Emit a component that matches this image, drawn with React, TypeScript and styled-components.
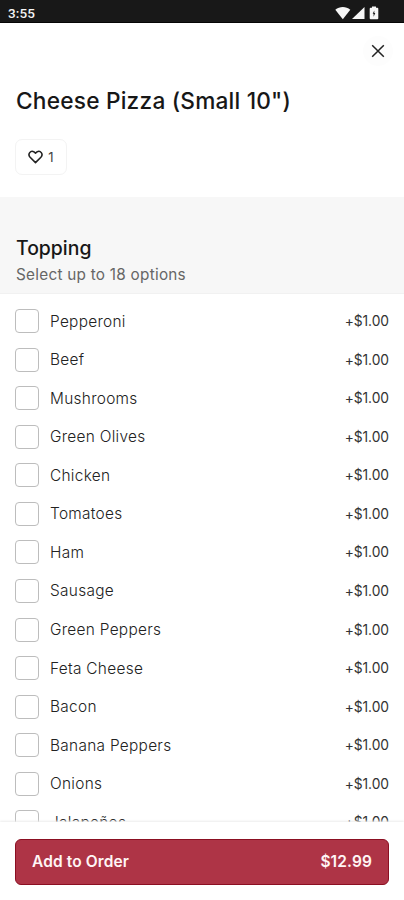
import React from "react";
import styled, { createGlobalStyle } from "styled-components";

const GlobalStyle = createGlobalStyle`
  * { box-sizing: border-box; }
  body {
    margin: 0;
    background: #fff;
    font-family: Inter, "Liberation Sans", sans-serif;
    overflow: hidden;
  }
`;

const Screen = styled.div`
  width: 404px;
  height: 900px;
  display: flex;
  flex-direction: column;
  overflow: hidden;
  background: #fff;
`;

const StatusBar = styled.div`
  height: 23px;
  flex: none;
  display: flex;
  align-items: center;
  justify-content: space-between;
  padding: 3px 25px 0 8px;
  background: #181818;
  border-bottom: 1px solid #050505;
`;

const Clock = styled.span`
  font: 500 13.5px/18px Roboto, sans-serif;
  letter-spacing: 0.1px;
  color: #f4f4f4;
`;

const StatusIcons = styled.svg`
  display: block;
  width: 44px;
  height: 14px;
`;

const ItemHeader = styled.header`
  height: 174px;
  flex: none;
  display: flex;
  flex-direction: column;
  align-items: flex-start;
  padding: 13px 11px 0 15px;
`;

const CloseButton = styled.button`
  align-self: flex-end;
  width: 30px;
  height: 30px;
  padding: 0;
  border: 0;
  border-radius: 50%;
  background: #fdfdfd;
  display: grid;
  place-items: center;
`;

const Title = styled.h1`
  margin: 20px 0 0 1px;
  font-size: 22.7px;
  line-height: 30px;
  font-weight: 500;
  letter-spacing: 0.2px;
  white-space: nowrap;
  color: #171717;
`;

const LikeButton = styled.button`
  margin-top: 23px;
  width: 52px;
  height: 36px;
  padding: 0;
  border: 1px solid #f3f3f3;
  border-radius: 7px;
  background: #fff;
  display: flex;
  align-items: center;
  justify-content: center;
  gap: 5px;
  font: 400 13px/16px Inter, sans-serif;
  color: #444;
`;

const SectionHeader = styled.div`
  height: 97px;
  flex: none;
  padding: 38px 16px 0;
  background: #f7f7f7;
  border-bottom: 1px solid #f1f1f1;
`;

const SectionTitle = styled.h2`
  margin: 0;
  font-size: 19.4px;
  line-height: 27px;
  font-weight: 500;
  color: #171717;
`;

const SectionHint = styled.p`
  margin: 2px 0 0;
  font-size: 15.3px;
  line-height: 22px;
  letter-spacing: 0.26px;
  color: #666;
`;

const OptionList = styled.div`
  flex: 1;
  min-height: 0;
  overflow: hidden;
  padding: 8px 15px 0;
`;

const OptionRow = styled.label`
  height: 38.54px;
  display: flex;
  align-items: center;
`;

const Checkbox = styled.input`
  appearance: none;
  flex: none;
  width: 24px;
  height: 24px;
  margin: 0 11px 0 0;
  border: 1px solid #bdbdbd;
  border-radius: 4px;
  background: #fff;
`;

const OptionName = styled.span`
  flex: 1;
  padding-top: 1px;
  font-size: 15.4px;
  line-height: 20px;
  font-weight: 300;
  letter-spacing: 0.3px;
  color: #222;
`;

const OptionPrice = styled.span`
  font-size: 13.8px;
  line-height: 20px;
  letter-spacing: -0.05px;
  color: #333;
`;

const Footer = styled.footer`
  height: 78px;
  flex: none;
  padding: 17px 15px 0;
  background: #fff;
  box-shadow: 0 -1px 2px #ececec;
  z-index: 1;
`;

const OrderButton = styled.button`
  width: 100%;
  height: 46px;
  padding: 0 16px;
  border: 1px solid #8b0f22;
  border-radius: 6px;
  background: #ae3446;
  display: flex;
  align-items: center;
  justify-content: space-between;
  font: 600 15.5px/20px Inter, sans-serif;
  letter-spacing: 0.12px;
  color: #fff5f5;
`;

const toppings = [
  "Pepperoni",
  "Beef",
  "Mushrooms",
  "Green Olives",
  "Chicken",
  "Tomatoes",
  "Ham",
  "Sausage",
  "Green Peppers",
  "Feta Cheese",
  "Bacon",
  "Banana Peppers",
  "Onions",
  "Jalapeños",
];

export default function App() {
  return (
    <>
      <GlobalStyle />
      <Screen>
        <StatusBar>
          <Clock>3:55</Clock>
          <StatusIcons viewBox="0 0 44 14" fill="#f6f6f6">
            <path d="M0.3 3.8C4.6 0.2 11 0.2 15.3 3.8L7.8 13.3Z" />
            <path d="M29.5 1V13H17Z" />
            <path
              fillRule="evenodd"
              d="M37 0.5h4v1.3h1.3q1 0 1 1V12.2q0 1-1 1h-6.6q-1 0-1-1V2.8q0-1 1-1H37ZM39.3 4.6L37.7 7.8H38.6V10.8L40.3 7H39.3Z"
            />
          </StatusIcons>
        </StatusBar>
        <ItemHeader>
          <CloseButton aria-label="Close">
            <svg width="14" height="14" viewBox="0 0 14 14" fill="none" stroke="#222" strokeWidth="1.5">
              <path d="M1.2 1.2L12.8 12.8M12.8 1.2L1.2 12.8" />
            </svg>
          </CloseButton>
          <Title>Cheese Pizza (Small 10")</Title>
          <LikeButton>
            <svg width="15" height="14" viewBox="0 0 15 14" fill="none" stroke="#222" strokeWidth="1.6" strokeLinejoin="round">
              <path d="M7.5 12.6L2.1 7.3C-0.7 4.3 2.6-0.3 6 1.9L7.5 3.1L9 1.9C12.4-0.3 15.7 4.3 12.9 7.3Z" />
            </svg>
            <span>1</span>
          </LikeButton>
        </ItemHeader>
        <SectionHeader>
          <SectionTitle>Topping</SectionTitle>
          <SectionHint>Select up to 18 options</SectionHint>
        </SectionHeader>
        <OptionList>
          {toppings.map((name) => (
            <OptionRow key={name}>
              <Checkbox type="checkbox" />
              <OptionName>{name}</OptionName>
              <OptionPrice>+$1.00</OptionPrice>
            </OptionRow>
          ))}
        </OptionList>
        <Footer>
          <OrderButton>
            <span>Add to Order</span>
            <span>$12.99</span>
          </OrderButton>
        </Footer>
      </Screen>
    </>
  );
}
